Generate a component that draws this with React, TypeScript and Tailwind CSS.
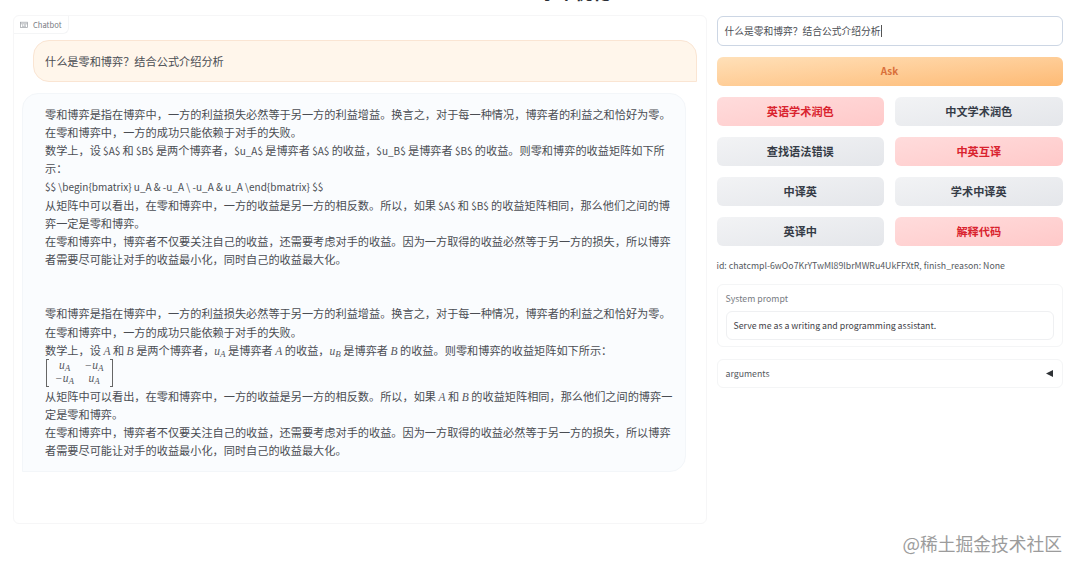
import type { ReactNode } from "react";

function L({ children }: { children: ReactNode }) {
  return <span className="text-[10.02px]">{children}</span>;
}

function Line({ children }: { children?: ReactNode }) {
  return <div className="h-[18.13px] leading-[18.13px] whitespace-nowrap">{children}</div>;
}

function V({ children, sub }: { children: ReactNode; sub?: string }) {
  return (
    <span className="font-['Liberation_Serif',serif] text-[11.5px] text-[#55585e] italic leading-none">
      {children}
      {sub && <span className="relative top-[2px] text-[9px]">{sub}</span>}
    </span>
  );
}

function Matrix() {
  return (
    <div className="flex h-[28px] w-[68px] items-stretch pl-px">
      <div className="w-[3px] border-y border-l border-[#666]" />
      <div className="grid flex-1 grid-cols-[31px_28px] grid-rows-2 items-center justify-items-center pb-px leading-none">
        <V sub="A">u</V>
        <V sub="A">−u</V>
        <V sub="A">−u</V>
        <V sub="A">u</V>
      </div>
      <div className="w-[3px] border-y border-r border-[#666]" />
    </div>
  );
}

const actions = [
  { label: "英语学术润色", stop: true },
  { label: "中文学术润色", stop: false },
  { label: "查找语法错误", stop: false },
  { label: "中英互译", stop: true },
  { label: "中译英", stop: false },
  { label: "学术中译英", stop: false },
  { label: "英译中", stop: false },
  { label: "解释代码", stop: true },
];

function ChatPanel() {
  return (
    <section className="h-[509px] w-[694px] shrink-0 rounded-[6px] border border-[#f6f6f7]">
      <div className="flex h-[18px] w-[55px] items-center gap-[5px] rounded-br-[6px] border-r border-b border-[#f4f5f6] pl-[6px] text-[7.6px] text-[#777b82]">
        <svg width="8" height="8" viewBox="0 0 8 8" fill="none" stroke="#999da3" strokeWidth="0.7">
          <rect x="0.4" y="1.2" width="7.2" height="5.4" />
          <path d="M0.4 2.8h7.2M2 4h1M4 4h2M2 5.3h4" />
        </svg>
        <span>Chatbot</span>
      </div>
      <div className="flex flex-col gap-[11px] pt-[6px] pr-[9px] pl-[8px] text-[11.18px] text-[#4a4d53]">
        <div className="ml-[11px] flex h-[42px] w-[664px] items-center rounded-[16px] rounded-br-none border border-[#fae5d3] bg-[#fff6eb] pl-[11px]">
          什么是零和博弈？结合公式介绍分析
        </div>
        <div className="h-[379px] w-[664px] rounded-[16px] rounded-bl-none border border-[#f3f6f9] bg-[#fafcfe] pt-[11px] pl-[22px]">
          <Line>零和博弈是指在博弈中，一方的利益损失必然等于另一方的利益增益。换言之，对于每一种情况，博弈者的利益之和恰好为零。</Line>
          <Line>在零和博弈中，一方的成功只能依赖于对手的失败。</Line>
          <Line>
            数学上，设<L> $A$ </L>和<L> $B$ </L>是两个博弈者，<L>$u_A$ </L>是博弈者<L> $A$ </L>的收益，<L>$u_B$ </L>是博弈者<L> $B$ </L>的收益。则零和博弈的收益矩阵如下所
          </Line>
          <Line>示：</Line>
          <div className="-mt-px mb-px">
            <Line>
              <L>{"$$ \\begin{bmatrix} u_A & -u_A \\ -u_A & u_A \\end{bmatrix} $$"}</L>
            </Line>
          </div>
          <Line>
            从矩阵中可以看出，在零和博弈中，一方的收益是另一方的相反数。所以，如果<L> $A$ </L>和<L> $B$ </L>的收益矩阵相同，那么他们之间的博
          </Line>
          <Line>弈一定是零和博弈。</Line>
          <Line>在零和博弈中，博弈者不仅要关注自己的收益，还需要考虑对手的收益。因为一方取得的收益必然等于另一方的损失，所以博弈</Line>
          <Line>者需要尽可能让对手的收益最小化，同时自己的收益最大化。</Line>
          <Line />
          <Line />
          <Line>零和博弈是指在博弈中，一方的利益损失必然等于另一方的利益增益。换言之，对于每一种情况，博弈者的利益之和恰好为零。</Line>
          <Line>在零和博弈中，一方的成功只能依赖于对手的失败。</Line>
          <Line>
            数学上，设 <V>A</V> 和 <V>B</V> 是两个博弈者，<V sub="A">u</V> 是博弈者 <V>A</V> 的收益，<V sub="B">u</V> 是博弈者 <V>B</V> 的收益。则零和博弈的收益矩阵如下所示：
          </Line>
          <Matrix />
          <Line>
            从矩阵中可以看出，在零和博弈中，一方的收益是另一方的相反数。所以，如果 <V>A</V> 和 <V>B</V> 的收益矩阵相同，那么他们之间的博弈一
          </Line>
          <Line>定是零和博弈。</Line>
          <Line>在零和博弈中，博弈者不仅要关注自己的收益，还需要考虑对手的收益。因为一方取得的收益必然等于另一方的损失，所以博弈</Line>
          <Line>者需要尽可能让对手的收益最小化，同时自己的收益最大化。</Line>
        </div>
      </div>
    </section>
  );
}

function Controls() {
  return (
    <aside className="flex w-[346px] shrink-0 flex-col pt-px">
      <div className="flex h-[30px] shrink-0 items-center rounded-[6px] border border-[#ccd6e4] bg-white pl-[7px] text-[9.75px] text-[#4a4d53]">
        什么是零和博弈？结合公式介绍分析
        <span className="h-[12px] w-px bg-[#555]" />
      </div>
      <button className="mt-[11px] h-[29px] shrink-0 rounded-[6px] bg-linear-to-br from-[#ffe0b8] to-[#fdba74] text-[9.9px] font-bold text-[#d9703a]">
        Ask
      </button>
      <div className="mt-[11px] grid grid-cols-2 gap-[11px]">
        {actions.map((a) => (
          <button
            key={a.label}
            className={
              a.stop
                ? "h-[29px] rounded-[6px] bg-linear-to-br from-[#ffdcdc] to-[#ffc9c9] text-[11.18px] font-bold text-[#d9232e]"
                : "h-[29px] rounded-[6px] bg-linear-to-br from-[#f2f3f5] to-[#e4e6ea] text-[11.18px] font-bold text-[#363c47]"
            }
          >
            {a.label}
          </button>
        ))}
      </div>
      <p className="mt-[12px] h-[16px] text-[8.76px] leading-[16px] whitespace-nowrap text-[#555960]">
        id: chatcmpl-6wOo7KrYTwMl89lbrMWRu4UkFFXtR, finish_reason: None
      </p>
      <div className="mt-[10px] h-[63px] rounded-[6px] border border-[#f4f5f6] px-[8px] pt-[7px]">
        <div className="h-[13px] text-[8.76px] leading-[13px] text-[#777b82]">System prompt</div>
        <div className="mt-[6px] flex h-[29px] items-center rounded-[6px] border border-[#eff0f2] pl-[7px] text-[8.76px] text-[#3d4046]">
          Serve me as a writing and programming assistant.
        </div>
      </div>
      <div className="mt-[12px] flex h-[29px] items-center justify-between rounded-[6px] border border-[#f4f5f6] pr-[9px] pl-[8px] text-[8.76px] text-[#555960]">
        <span>arguments</span>
        <svg width="7" height="7" viewBox="0 0 7 7" fill="#2f3236">
          <path d="M0 3.5L7 0v7z" />
        </svg>
      </div>
    </aside>
  );
}

export default function App() {
  return (
    <div className="relative flex h-[572px] w-[1080px] flex-col overflow-hidden bg-white font-['Noto_Sans_CJK_SC',sans-serif]">
      <h1 className="-mt-[21px] h-[26px] shrink-0 text-center text-[17.6px] leading-[26px] font-bold text-[#2b2e35]">
        <span className="text-[15.6px]">ChatGPT </span>学术优化
      </h1>
      <main className="mt-[10px] flex h-[509px] shrink-0 gap-[9.5px] pl-[13px]">
        <ChatPanel />
        <Controls />
      </main>
      <footer className="mt-[6px] mr-[18px] text-right text-[17.75px] leading-[26px] text-[#9c9c9c]">
        <span className="text-[18.5px]">@</span>稀土掘金技术社区
      </footer>
    </div>
  );
}
